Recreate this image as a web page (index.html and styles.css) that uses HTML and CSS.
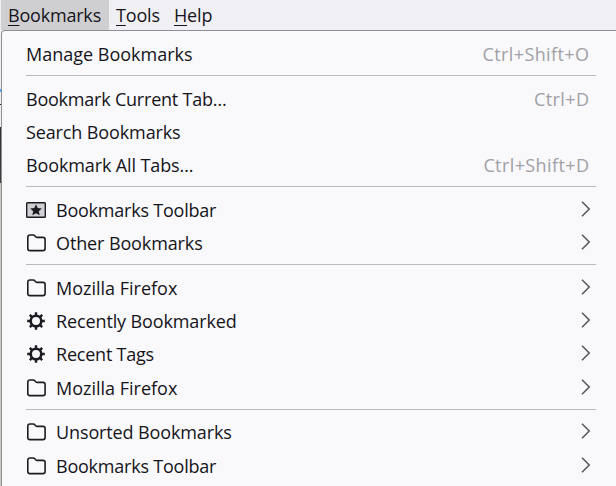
FILE: index.html
```html
<!DOCTYPE html>
<html lang="en">
  <head>
    <meta charset="utf-8">
    <title>Bookmarks menu</title>
    <link rel="stylesheet" href="styles.css">
  </head>
  <body>
    <svg class="sprite">
      <symbol id="folder" viewBox="0 0 20 20">
        <path d="M1.8 4.2 Q1.8 2 4 2 H7.2 Q8.2 2 8.8 2.8 L9.7 3.8 Q10.3 4.4 11.2 4.4 H16.9 Q19.1 4.4 19.1 6.6 V15.4 Q19.1 17.6 16.9 17.6 H4 Q1.8 17.6 1.8 15.4 Z" fill="none" stroke="#1c1b22" stroke-width="1.6"/>
      </symbol>
      <symbol id="toolbar" viewBox="0 0 20 20">
        <rect x=".7" y="2.7" width="18.6" height="14.6" rx=".8" fill="#d0d0d4" stroke="#1c1b22" stroke-width="1.4"/>
        <path d="M10 4.2 L11.7 8 L15.8 8.4 L12.8 11.2 L13.7 15.3 L10 13.2 L6.3 15.3 L7.2 11.2 L4.2 8.4 L8.3 8 Z" fill="#1c1b22"/>
      </symbol>
      <symbol id="gear" viewBox="0 0 20 20">
        <g fill="none" stroke="#1c1b22">
          <circle cx="10" cy="10" r="5.3" stroke-width="2.6"/>
          <path d="M10 1.2 V4 M10 16 V18.8 M1.2 10 H4 M16 10 H18.8 M3.8 3.8 L5.8 5.8 M14.2 14.2 L16.2 16.2 M3.8 16.2 L5.8 14.2 M14.2 5.8 L16.2 3.8" stroke-width="2.4"/>
        </g>
      </symbol>
      <symbol id="arrow" viewBox="0 0 10 16">
        <path d="M1 .8 L8.2 8 L1 15.2" fill="none" stroke="#5b5b5f" stroke-width="1.6"/>
      </symbol>
    </svg>

    <div class="menubar">
      <span class="menu-title open"><u>B</u>ookmarks</span>
      <span class="menu-title"><u>T</u>ools</span>
      <span class="menu-title"><u>H</u>elp</span>
    </div>

    <div class="window">
      <div class="menu">
        <div class="item"><span class="label wide">Manage Bookmarks</span><span class="key">Ctrl+Shift+O</span></div>
        <hr>
        <div class="item"><span class="label tight">Bookmark Current Tab…</span><span class="key">Ctrl+D</span></div>
        <div class="item"><span class="label">Search Bookmarks</span></div>
        <div class="item"><span class="label">Bookmark All Tabs…</span><span class="key">Ctrl+Shift+D</span></div>
        <hr>
        <div class="item"><svg class="icon"><use href="#toolbar"/></svg><span class="label tight">Bookmarks Toolbar</span><svg class="arrow"><use href="#arrow"/></svg></div>
        <div class="item"><svg class="icon"><use href="#folder"/></svg><span class="label">Other Bookmarks</span><svg class="arrow"><use href="#arrow"/></svg></div>
        <hr>
        <div class="item"><svg class="icon"><use href="#folder"/></svg><span class="label wide">Mozilla Firefox</span><svg class="arrow"><use href="#arrow"/></svg></div>
        <div class="item"><svg class="icon"><use href="#gear"/></svg><span class="label">Recently Bookmarked</span><svg class="arrow"><use href="#arrow"/></svg></div>
        <div class="item"><svg class="icon"><use href="#gear"/></svg><span class="label tight">Recent Tags</span><svg class="arrow"><use href="#arrow"/></svg></div>
        <div class="item"><svg class="icon"><use href="#folder"/></svg><span class="label wide">Mozilla Firefox</span><svg class="arrow"><use href="#arrow"/></svg></div>
        <hr>
        <div class="item"><svg class="icon"><use href="#folder"/></svg><span class="label">Unsorted Bookmarks</span><svg class="arrow"><use href="#arrow"/></svg></div>
        <div class="item"><svg class="icon"><use href="#folder"/></svg><span class="label tight">Bookmarks Toolbar</span><svg class="arrow"><use href="#arrow"/></svg></div>
      </div>
    </div>
  </body>
</html>
```

FILE: styles.css
```css
* {
  box-sizing: border-box;
}
body {
  margin: 0;
  height: 486px;
  overflow: hidden;
  background-color: #f0f0f4;
  color: #15141a;
  font-family: 'Open Sans', 'Noto Sans', sans-serif;
  font-size: 18px;
}
.sprite {
  display: none;
}
.menubar {
  display: flex;
  height: 30px;
  padding-left: 1px;
  line-height: 30px;
}
.menu-title {
  padding: 0 7px;
  letter-spacing: -0.15px;
  white-space: nowrap;
}
.menu-title u {
  text-decoration-thickness: 1px;
  text-underline-offset: 3px;
}
.open {
  width: 108px;
  letter-spacing: -0.2px;
  background-color: #cfcfd2;
}
/* sliver of the page behind the menu */
.window {
  height: 456px;
  padding-left: 1px;
  background: linear-gradient(#f0f0f4 59px, #45a1ff 59px, #45a1ff 62px, #f0f0f4 62px, #f0f0f4 74px, #222 74px, #222 75px, #f0f0f4 75px, #f0f0f4 97px, #2c302b 97px, #3c443b 153px, #c8c8c0 153px);
}
.menu {
  height: 470px;
  padding: 6.3px 20px 0 24px;
  border-top: 1px solid #8f8f94;
  border-left: 1px solid #8f8f94;
  border-top-left-radius: 4px;
  background-color: #f9f9fb;
}
.item {
  display: flex;
  align-items: center;
  height: 33.33px;
}
.label {
  flex: 1;
  letter-spacing: -0.12px;
  white-space: nowrap;
}
.tight {
  letter-spacing: -0.22px;
}
.wide {
  letter-spacing: 0;
}
.key {
  padding-right: 6.6px;
  letter-spacing: 0.4px;
  color: #a0a0a6;
}
.icon {
  width: 20px;
  height: 20px;
  margin-right: 10px;
}
.arrow {
  width: 10px;
  height: 16px;
  margin: 0 5px 2px 0;
}
hr {
  height: 1px;
  margin: 4.5px 0 5.8px;
  border: 0;
  background-color: #bababd;
}
```
